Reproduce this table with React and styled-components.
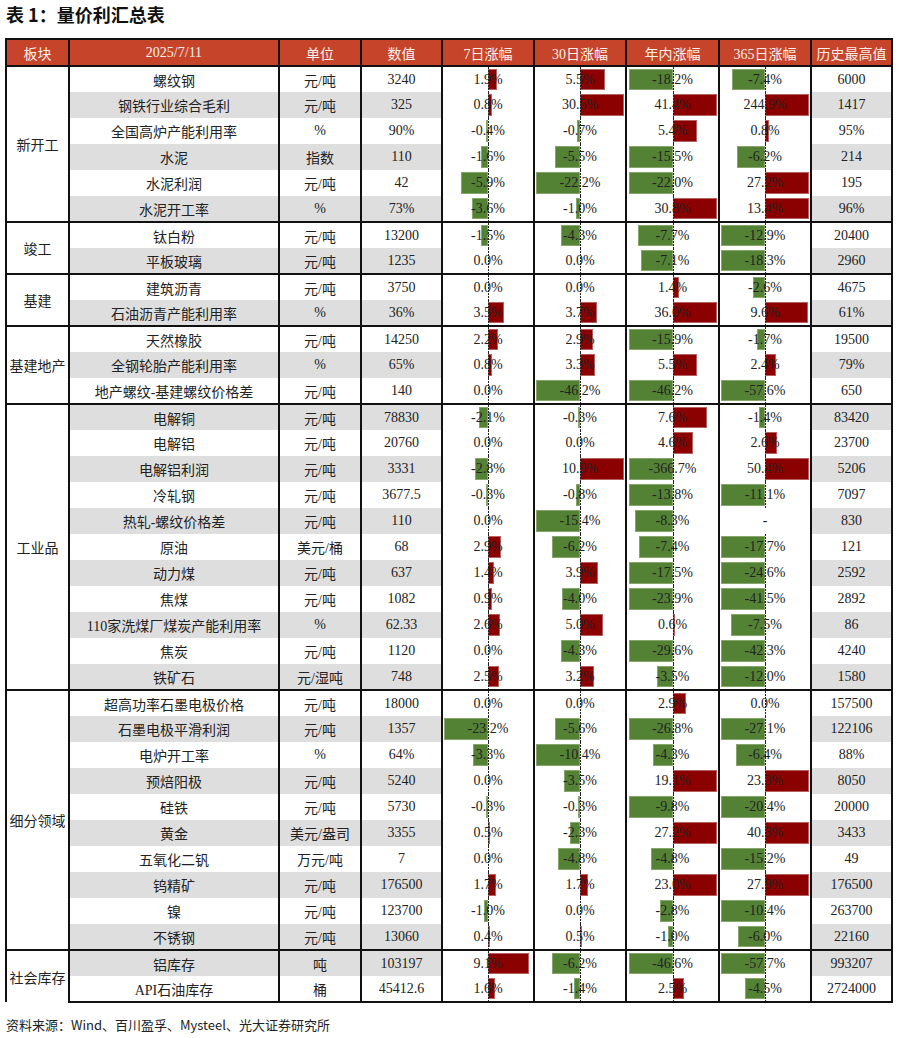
import React from 'react';
import styled, { createGlobalStyle } from 'styled-components';

const GlobalStyle = createGlobalStyle`
  body {
    margin: 0;
    background: #fff;
    font-family: "Liberation Serif", "Noto Sans CJK SC", serif;
  }
`;

const sections = [
  {
    name: '新开工',
    rows: [
      ['螺纹钢', '元/吨', '3240', [1.9, 5.5, -18.2, -7.4], '6000', 0],
      ['钢铁行业综合毛利', '元/吨', '325', [0.8, 30.5, 41.4, 244.9], '1417', 1],
      ['全国高炉产能利用率', '%', '90%', [-0.4, -0.7, 5.4, 0.8], '95%', 0],
      ['水泥', '指数', '110', [-1.6, -5.5, -15.5, -6.2], '214', 1],
      ['水泥利润', '元/吨', '42', [-5.9, -22.2, -22.0, 27.2], '195', 0],
      ['水泥开工率', '%', '73%', [-3.6, -1.0, 30.8, 13.4], '96%', 1],
    ],
  },
  {
    name: '竣工',
    rows: [
      ['钛白粉', '元/吨', '13200', [-1.5, -4.3, -7.7, -12.9], '20400', 0],
      ['平板玻璃', '元/吨', '1235', [0, 0, -7.1, -18.3], '2960', 1],
    ],
  },
  {
    name: '基建',
    rows: [
      ['建筑沥青', '元/吨', '3750', [0, 0, 1.4, -2.6], '4675', 0],
      ['石油沥青产能利用率', '%', '36%', [3.5, 3.7, 36.0, 9.6], '61%', 1],
    ],
  },
  {
    name: '基建地产',
    rows: [
      ['天然橡胶', '元/吨', '14250', [2.2, 2.9, -15.9, -1.7], '19500', 0],
      ['全钢轮胎产能利用率', '%', '65%', [0.8, 3.3, 5.5, 2.4], '79%', 1],
      ['地产螺纹-基建螺纹价格差', '元/吨', '140', [0, -46.2, -46.2, -57.6], '650', 0],
    ],
  },
  {
    name: '工业品',
    rows: [
      ['电解铜', '元/吨', '78830', [-2.1, -0.3, 7.6, -1.4], '83420', 1],
      ['电解铝', '元/吨', '20760', [0, 0, 4.6, 2.6], '23700', 0],
      ['电解铝利润', '元/吨', '3331', [-2.8, 10.9, -366.7, 50.4], '5206', 1],
      ['冷轧钢', '元/吨', '3677.5', [-0.3, -0.8, -13.8, -11.1], '7097', 0],
      ['热轧-螺纹价格差', '元/吨', '110', [0, -15.4, -8.3, null], '830', 1],
      ['原油', '美元/桶', '68', [2.9, -6.2, -7.4, -17.7], '121', 0],
      ['动力煤', '元/吨', '637', [1.4, 3.9, -17.5, -24.6], '2592', 1],
      ['焦煤', '元/吨', '1082', [0.9, -4.0, -23.9, -41.5], '2892', 0],
      ['110家洗煤厂煤炭产能利用率', '%', '62.33', [2.6, 5.0, 0.6, -7.5], '86', 1],
      ['焦炭', '元/吨', '1120', [0, -4.3, -29.6, -42.3], '4240', 0],
      ['铁矿石', '元/湿吨', '748', [2.5, 3.2, -3.5, -12.0], '1580', 1],
    ],
  },
  {
    name: '细分领域',
    rows: [
      ['超高功率石墨电极价格', '元/吨', '18000', [0, 0, 2.9, 0], '157500', 0],
      ['石墨电极平滑利润', '元/吨', '1357', [-23.2, -5.6, -26.8, -27.1], '122106', 1],
      ['电炉开工率', '%', '64%', [-3.3, -10.4, -4.3, -6.4], '88%', 0],
      ['预焙阳极', '元/吨', '5240', [0, -3.5, 19.1, 23.3], '8050', 1],
      ['硅铁', '元/吨', '5730', [-0.3, -0.3, -9.8, -20.4], '20000', 0],
      ['黄金', '美元/盎司', '3355', [0.5, -2.3, 27.2, 40.3], '3433', 1],
      ['五氧化二钒', '万元/吨', '7', [0, -4.8, -4.8, -15.2], '49', 0],
      ['钨精矿', '元/吨', '176500', [1.7, 1.7, 23.0, 27.9], '176500', 1],
      ['镍', '元/吨', '123700', [-1.0, 0, -2.8, -10.4], '263700', 0],
      ['不锈钢', '元/吨', '13060', [0.4, 0.5, -1.0, -6.0], '22160', 1],
    ],
  },
  {
    name: '社会库存',
    rows: [
      ['铝库存', '吨', '103197', [9.1, -6.2, -46.6, -57.7], '993207', 1],
      ['API石油库存', '桶', '45412.6', [1.6, -1.4, 2.5, -4.5], '2724000', 0],
    ],
  },
];

const headers = ['板块', '2025/7/11', '单位', '数值', '7日涨幅', '30日涨幅', '年内涨幅', '365日涨幅', '历史最高值'];
const widths = [63, 210, 82, 81, 92, 92, 93, 92, 81];

const ChangeValue = ({ v }) => {
  if (v === null) {
    return (
      <ChangeCell>
        <Label>-</Label>
      </ChangeCell>
    );
  }
  const w = Math.min(Math.abs(v) * 4.5, 44);
  return (
    <ChangeCell>
      {v !== 0 && <Bar $neg={v < 0} style={{ width: w }} />}
      <Axis />
      <Label>{v.toFixed(1)}%</Label>
    </ChangeCell>
  );
};

const App = () => {
  return (
    <Page>
      <GlobalStyle />
      <Title>表 1：量价利汇总表</Title>
      <Table>
        <colgroup>
          {widths.map((w, i) => (
            <col key={i} style={{ width: w }} />
          ))}
        </colgroup>
        <thead>
          <tr>
            {headers.map(h => (
              <HeadCell key={h}>{h}</HeadCell>
            ))}
          </tr>
        </thead>
        {sections.map(sec => (
          <tbody key={sec.name}>
            {sec.rows.map((r, i) => (
              <Row key={r[0]} $first={i === 0} $last={i === sec.rows.length - 1}>
                {i === 0 ? <SectionCell rowSpan={sec.rows.length}>{sec.name}</SectionCell> : null}
                <Cell $shade={r[5]}>{r[0]}</Cell>
                <Cell $shade={r[5]}>{r[1]}</Cell>
                <Cell $shade={r[5]}>{r[2]}</Cell>
                {r[3].map((v, k) => (
                  <ChangeValue key={k} v={v} />
                ))}
                <Cell $shade={r[5]}>{r[4]}</Cell>
              </Row>
            ))}
          </tbody>
        ))}
      </Table>
      <Source>资料来源：Wind、百川盈孚、Mysteel、光大证券研究所</Source>
    </Page>
  );
};

export default App;

const Page = styled.div`
  padding: 0 5px;
  width: 889px;
`;

const Title = styled.div`
  font-family: "Noto Sans CJK SC", sans-serif;
  font-weight: 700;
  font-size: 18px;
  line-height: 28px;
  color: #111;
  padding-left: 1px;
  margin-bottom: 10px;
`;

const Table = styled.table`
  border-collapse: collapse;
  table-layout: fixed;
  width: 888px;
  font-size: 14px;
  color: #222;
`;

const HeadCell = styled.th`
  height: 25px;
  padding: 0;
  background: #c6452a;
  color: #fbefe9;
  font-weight: 400;
  text-align: center;
  border: 2px solid #111;
`;

const Row = styled.tr`
  & > td {
    height: ${p => 26 - (p.$first ? 1 : 0) - (p.$last ? 1 : 0)}px;
    border-top: ${p => (p.$first ? '2px solid #111' : 'none')};
    border-bottom: ${p => (p.$last ? '2px solid #111' : 'none')};
  }
`;

const Cell = styled.td`
  padding: 0;
  text-align: center;
  white-space: nowrap;
  background: ${p => (p.$shade ? '#dedede' : '#fff')};
  border-left: 2px solid #111;
  border-right: 2px solid #111;
`;

const SectionCell = styled(Cell)`
  background: #fff;
`;

const ChangeCell = styled.td`
  position: relative;
  padding: 0;
  text-align: center;
  white-space: nowrap;
  background: #fff;
  border-left: 2px solid #111;
  border-right: 2px solid #111;
`;

const Bar = styled.span`
  position: absolute;
  top: 2px;
  bottom: 2px;
  box-sizing: border-box;
  ${p => (p.$neg ? 'right: 50%;' : 'left: 50%;')}
  background: ${p => (p.$neg ? '#548235' : '#8b0000')};
  border: 1px solid ${p => (p.$neg ? '#86a66c' : '#b66060')};
`;

const Axis = styled.span`
  position: absolute;
  top: 0;
  bottom: 0;
  left: 50%;
  width: 1px;
  background: repeating-linear-gradient(to bottom, #222 0 2px, transparent 2px 3px);
`;

const Label = styled.span`
  position: relative;
  z-index: 1;
`;

const Source = styled.div`
  font-family: "Noto Sans CJK SC", sans-serif;
  font-size: 13px;
  line-height: 20px;
  color: #222;
  margin-top: 12px;
  padding-left: 1px;
`;
